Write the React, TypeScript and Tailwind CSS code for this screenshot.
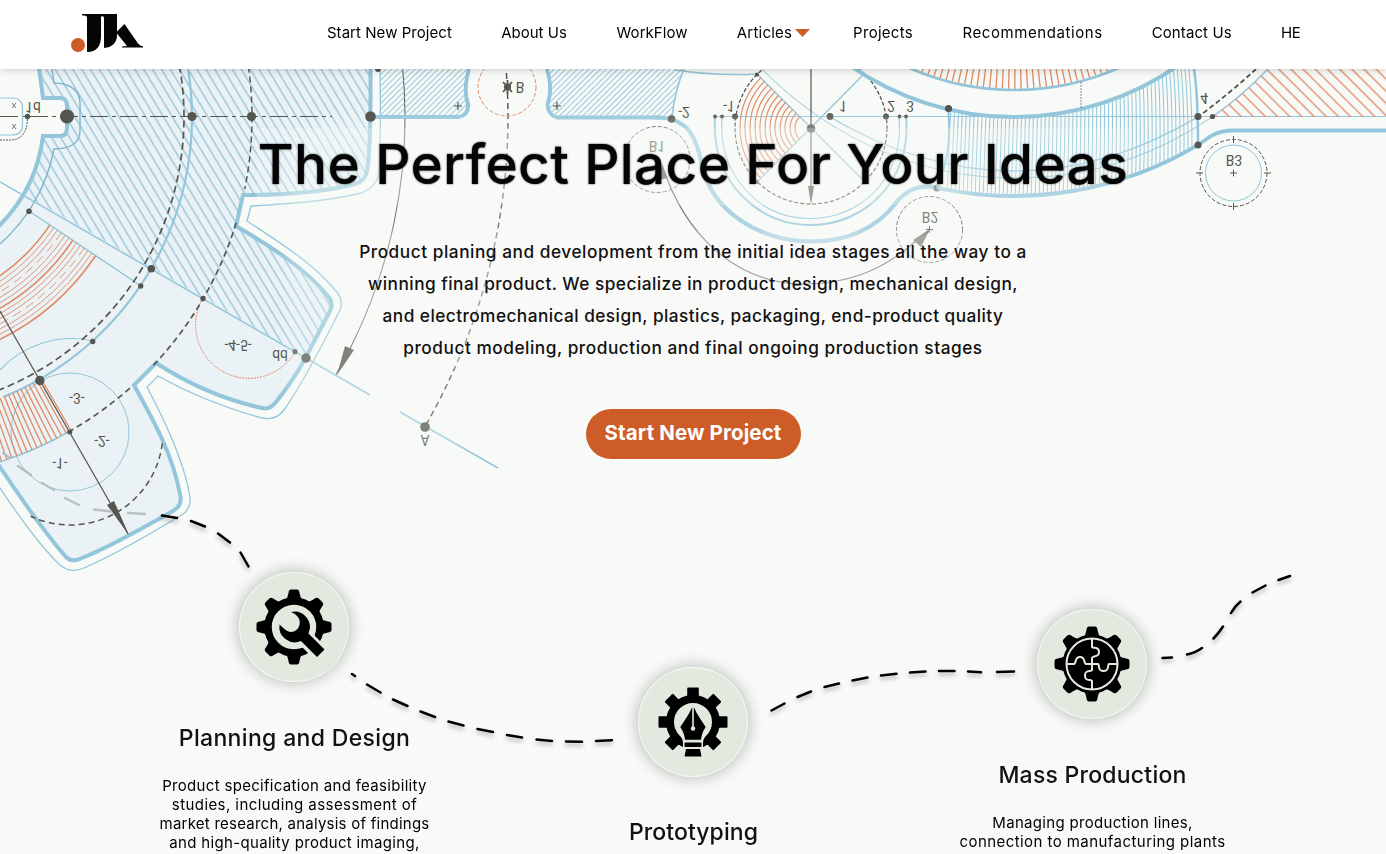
import React from 'react';

const BLUE = '#93c6da';
const ORANGE = '#e08a64';
const DARK = '#55564f';
const SAGE = '#e2eadf';

const rad = (deg: number) => (deg * Math.PI) / 180;
const polar = (cx: number, cy: number, r: number, deg: number) =>
  `${(cx + r * Math.cos(rad(deg))).toFixed(1)} ${(cy + r * Math.sin(rad(deg))).toFixed(1)}`;
const arc = (cx: number, cy: number, r: number, a: number, b: number) =>
  `M${polar(cx, cy, r, a)} A${r} ${r} 0 0 1 ${polar(cx, cy, r, b)}`;
const ray = (cx: number, cy: number, r1: number, r2: number, deg: number) =>
  `M${polar(cx, cy, r1, deg)} L${polar(cx, cy, r2, deg)}`;
const range = (from: number, to: number, step: number) => {
  const out: number[] = [];
  for (let v = from; v <= to; v += step) out.push(v);
  return out;
};

type NoteProps = { x: number; y: number; size?: number; fill?: string; children: string };
function Note({ x, y, size = 15, fill = '#55564f', children }: NoteProps) {
  return (
    <text
      transform={`translate(${x} ${y}) scale(0.92 -1)`}
      textAnchor="middle"
      dominantBaseline="central"
      fontSize={size}
      fill={fill}
      className="font-['Roboto'] font-normal"
    >
      {children}
    </text>
  );
}

const GEAR =
  'M0 60 L38 60 L43 98 H60 Q67 98 67 106 V128 Q67 136 60 136 H43 A154 154 0 0 1 -10 234 L-10 460 L0 467 C22 500 44 532 66 557 Q72 563 82 558 C112 546 143 528 173 511 Q183 505 180 494 C172 452 153 420 134 385 L156 363 C190 385 225 400 262 408 Q270 410 276 402 C288 387 298 372 306 357 L330 311 Q334 303 328 296 C305 268 270 246 236 226 L243 195 C290 195 325 192 355 184 Q367 181 368 165 Q371 140 370.5 60';
const GEAR_HATCH =
  'M38 60 L43 98 H60 Q67 98 67 106 V128 Q67 136 60 136 H43 A154 154 0 0 1 24 194 L306 357 L330 311 Q334 303 328 296 C305 268 270 246 236 226 L243 195 C290 195 325 192 355 184 Q367 181 368 165 Q371 140 370.5 60 Z';

function Blueprint() {
  const gx = -110;
  const gy = 117;
  return (
    <svg width="1386" height="600" viewBox="0 0 1386 600" fill="none" className="absolute left-0 top-0">
      <defs>
        <pattern id="steep" width="7.6" height="10" patternUnits="userSpaceOnUse" patternTransform="rotate(-31)">
          <path d="M4 0 V10" stroke={BLUE} strokeWidth="1.35" />
        </pattern>
        <pattern id="fine" width="4.1" height="10" patternUnits="userSpaceOnUse" patternTransform="rotate(45)">
          <path d="M2 0 V10" stroke={BLUE} strokeWidth="1" />
        </pattern>
        <pattern id="rust" width="8.6" height="10" patternUnits="userSpaceOnUse" patternTransform="rotate(-45)">
          <path d="M4 0 V10" stroke={ORANGE} strokeWidth="1.3" />
        </pattern>
        <clipPath id="band">
          <path d="M857 69 A287 287 0 0 0 1170 69 H1194 Q1198 95 1198 145 A361 361 0 0 1 937 188 Q953 150 948 108 Z" />
        </clipPath>
        <filter id="soft" x="-20%" y="-20%" width="140%" height="140%">
          <feGaussianBlur stdDeviation="6" />
        </filter>
      </defs>

      {/* large gear */}
      <path d={GEAR} fill="#ebf2f5" />
      <path d={GEAR_HATCH} fill="url(#steep)" />
      <g stroke={BLUE}>
        <path d="M38 60 L43 98 H60 Q67 98 67 106 V128 Q67 136 60 136 H43 A154 154 0 0 1 -1 226" strokeWidth="4" />
        <path d="M52 69 L54 83 C72 83 80 92 80 103 V131 C80 143 70 149 54 149 A168 168 0 0 1 0 244" stroke="#7fb4cb" strokeWidth="1.4" />
        <path d={arc(gx, gy, 302, -9, 68)} strokeWidth="2.2" />
        <path d={arc(gx, gy, 362, 60, 75)} strokeWidth="1.5" />
        <path d="M0 182 L370 395 M400 412 L498 468 M29 211 L141 286" strokeWidth="1.5" />
        <path d="M-2 464 C22 500 44 532 66 557 Q72 563 82 558 C112 546 143 528 173 511 Q183 505 180 494 C172 452 153 420 134 385 L156 363 C190 385 225 400 262 408 Q270 410 276 402 C288 387 298 372 306 357 L330 311 Q334 303 328 296 C305 268 270 246 236 226 L243 195 C290 195 325 192 355 184 Q367 181 368 165 Q371 140 370.5 60" strokeWidth="4" />
        <path d="M0 488 C20 518 42 548 60 565 Q71 574 84 568 C118 553 152 533 183 514 Q191 508 190 497 C184 460 163 417 147 387 L158 376 C190 394 225 408 262 418 Q276 421 284 410 C303 383 322 346 340 310 Q344 300 336 291 C312 262 280 243 247 221 L251 206 C290 204 330 201 361 193 Q378 187 379 170 Q381 140 380 69" strokeWidth="1.3" />
        <circle cx="70" cy="432" r="59" strokeWidth="1" />
        <path d="M0 370 A97 97 0 0 1 93 341" strokeWidth="1.2" />
      </g>

      <g stroke={ORANGE}>
        {range(193, 248, 4.58).map((r, i) => (
          <path
            key={r}
            d={arc(gx, gy, r, 34, 68)}
            strokeWidth={i === 0 || i === 6 || i === 12 ? 1.6 : 0.9}
            strokeDasharray={i === 3 || i === 9 ? '9 6' : undefined}
          />
        ))}
        {range(60, 75, 0.86).map((a) => (
          <path key={a} d={ray(gx, gy, 302, 362, a)} strokeWidth="1.3" />
        ))}
        <path d="M203 298 A52 52 0 1 0 295 352" strokeWidth="1" strokeDasharray="2 1" />
      </g>

      <g stroke={DARK}>
        <path d={arc(gx, gy, 294, -10, 70)} strokeWidth="1.7" strokeDasharray="7 4" />
        <path d={arc(gx, gy, 362, -8, 11.5)} strokeWidth="1.5" strokeDasharray="6 4" />
        <path d={arc(gx, gy, 362, 17, 43.5)} strokeWidth="1.7" strokeDasharray="6 4" />
        <path d={arc(gx, gy, 362, 48.5, 60)} strokeWidth="1.7" strokeDasharray="6 4" />
        <path d={arc(70, 432, 93, 7, 115)} strokeWidth="1.5" strokeDasharray="6 4" />
        <path d="M0 311 L128 534" strokeWidth="1.2" />
        <path d="M0 116.500 H332" strokeWidth="1" strokeDasharray="18 4 4 4" />
        <path d="M0 140 H10 Q27 140 27.500 118" strokeWidth="1" strokeDasharray="2 1" />
        <path d={arc(gx, gy, 515, -6, 30)} strokeWidth="1.1" />
        <path d={arc(gx, gy, 618, -5, 30)} strokeWidth="1.5" strokeDasharray="6 4" />
        <path d="M12 103 l4 5 m0 -5 l-4 5 M12 124 l4 5 m0 -5 l-4 5" strokeWidth="0.8" />
      </g>
      <path d="M0 98 H12 Q22.500 98 22.500 108 V125 Q22.500 135 12 135 H0" stroke={BLUE} strokeWidth="1.2" />
      <g fill={DARK}>
        <circle cx="67" cy="116.500" r="7" />
        <circle cx="27.500" cy="116.500" r="2.700" />
        <circle cx="192" cy="116.500" r="4.600" />
        <circle cx="251.500" cy="116.500" r="4.600" />
        <circle cx="29" cy="211.300" r="2.800" />
        <circle cx="151.300" cy="268.700" r="3.800" />
        <circle cx="140.700" cy="286" r="2.700" />
        <circle cx="203" cy="298.500" r="2.700" />
        <circle cx="92.700" cy="341.500" r="2.700" />
        <circle cx="39.800" cy="380.500" r="4.700" />
        <circle cx="69.700" cy="432" r="2.500" />
        <circle cx="306" cy="358" r="4.700" />
        <circle cx="295" cy="351.700" r="2.600" />
        <circle cx="425" cy="427" r="4.800" />
        <path d="M107 505 L114 501 L129 535 Z" />
        <path d="M337 375 L345 346 L354 350 Z" />
        <circle cx="378" cy="69" r="3" />
      </g>

      {/* upper bracket */}
      <g>
        <path d="M380 69 H470 Q464 90 469 105 Q467 115 459 117 H380 Z" fill="url(#fine)" />
        <path d="M547 69 Q553 90 547 105 Q549 115 557 117 H672 Q675 90 684 69 Z" fill="url(#fine)" />
        <path d="M374 117 H459 Q469 115 468 104 Q463 90 469 69 M547 69 Q553 90 547.500 104 Q548 115 557 117.500 H660" stroke={BLUE} strokeWidth="3.800" />
        <path d="M672 117 Q675 90 684 69" stroke={BLUE} strokeWidth="1.600" />
        <path d="M675 70 Q715 76 757 74" stroke={BLUE} strokeWidth="1.300" />
        <circle cx="507" cy="87" r="29" stroke={ORANGE} strokeWidth="1" strokeDasharray="4 2" />
        <path d="M507.500 80 V94 M503 82 L512 92 M512 82 L503 92" stroke={DARK} strokeWidth="1.800" />
        <circle cx="507.500" cy="87" r="3.600" fill={DARK} />
        <path d="M454 106 h8 m-4 -4 v8 M553 106 h8 m-4 -4 v8" stroke={DARK} strokeWidth="1.200" />
      </g>

      {/* rotor */}
      <path d="M655 117.500 C690 117 697 140 702 165 C712 213 762 241.500 811 241.500 C850 241.500 878 226 896 203 C907 189 920 184 937 188" stroke={BLUE} strokeWidth="4.200" />
      <g stroke={BLUE}>
        <path d="M715 117 C713 145 721 170 735 188 C758 216 785 225 811 225 C865 225 912 180 906 117" strokeWidth="2" />
        <path d="M722 117 C720 145 727 166 740 183 C760 210 785 218.500 811 218.500 C860 218.500 905 178 899 117" strokeWidth="1.200" />
        <path d="M717 116.500 H1386" strokeWidth="1.100" />
        <path d="M757 74 L865 182 M757 182 L864 74" strokeWidth="1.300" />
        <path d="M763 70 C830 138 920 178 1013 178 C1090 178 1150 158 1212 117" strokeWidth="1" />
        <path d="M830 117 C885 150 950 171 1013 171 C1085 171 1145 148 1198 117" strokeWidth="1.300" />
      </g>
      <g stroke={ORANGE} strokeWidth="1.200">
        {range(16, 72, 5).map((r) => (
          <path key={r} d={arc(811, 128, r, 135, 225)} />
        ))}
      </g>
      <circle cx="811" cy="128" r="76" stroke={DARK} strokeWidth="1.300" strokeDasharray="4 2" />
      <path d="M811 69 V190 M662 165 C685 235 735 283 803 284 C855 284 890 265 918 239" stroke={DARK} strokeWidth="1.200" />
      <g fill={DARK}>
        <path d="M808 186 H814 L811 205 Z M658 180 L662 165 L668 178 Z M913 240 L930 229 L921 247 Z" />
        <circle cx="811" cy="128.500" r="4.300" />
        <circle cx="830" cy="116.500" r="3.400" />
        <circle cx="735" cy="116.500" r="3" />
        <circle cx="715" cy="116.500" r="1.900" />
        <circle cx="722" cy="116.500" r="1.900" />
        <circle cx="886" cy="116.500" r="3" />
        <circle cx="899.500" cy="116.500" r="1.900" />
        <circle cx="906" cy="116.500" r="1.900" />
        <circle cx="757" cy="74.500" r="2" />
        <circle cx="757" cy="182" r="2" />
        <circle cx="865" cy="182" r="2" />
        <circle cx="671.500" cy="119" r="3.800" />
        <circle cx="937" cy="188" r="3.500" />
      </g>
      <g stroke={DARK} strokeWidth="1" strokeDasharray="4 2">
        <circle cx="657" cy="159.500" r="33" />
        <circle cx="929.500" cy="229.500" r="33" />
        <circle cx="1233.500" cy="173" r="33.500" />
      </g>
      <circle cx="1233.500" cy="173" r="28" stroke={BLUE} strokeWidth="1" />
      <path
        d="M1230 173 h7 m-3.500 -3.500 v7 M1233.500 136 v7 M1233.500 203 v7 M1196 173 h7 M1264 173 h7 M926 229.500 h7 m-3.500 -3.500 v7"
        stroke={DARK}
        strokeWidth="1"
      />

      {/* large wheel on the right */}
      <g clipPath="url(#band)" stroke={BLUE} strokeWidth="1">
        {range(950, 1197, 4).map((x) => (
          <path key={x} d={`M${x - (x - 1040) * 0.04} 60 Q${x} 110 ${x - 3} 200`} />
        ))}
      </g>
      <g stroke={ORANGE} strokeWidth="1.300">
        {range(66, 114, 1.4).map((a) => (
          <path key={a} d={ray(1014, -170, 230, 259, a)} />
        ))}
      </g>
      <g stroke={BLUE}>
        <path d={arc(1014, -170, 260, 66, 114)} strokeWidth="2.500" />
        <path d={arc(1014, -170, 287, 55, 125)} strokeWidth="4" />
        <path d={arc(1013, -165, 361, 59, 102)} strokeWidth="4" />
        <path d="M948 108 Q953 150 937 188" strokeWidth="2" />
        <path d="M1194 69 Q1198 95 1198 145" strokeWidth="2.500" />
        <path d="M1198 145 L1211 136 Q1220 130.500 1234 130.500 H1386" strokeWidth="3.800" />
        <path d="M1268 69 Q1240 98 1212 117" strokeWidth="1.500" />
      </g>
      <path d="M1268 69 Q1240 98 1212 117 H1386 V69 Z" fill="url(#rust)" />
      <path d="M1256 69 Q1230 93 1198 117" stroke={DARK} strokeWidth="1.800" strokeDasharray="5 3" />
      <path d="M1081 82 V109" stroke={DARK} strokeWidth="0.700" strokeDasharray="2 1" />
      <g fill={DARK}>
        <circle cx="948.500" cy="108.500" r="3.600" />
        <circle cx="1198" cy="116.500" r="3.500" />
        <circle cx="1198" cy="145" r="3.500" />
        <circle cx="1212.500" cy="116.500" r="2.600" />
      </g>

      {/* annotations */}
      <Note x={33} y={107}>1d</Note>
      <Note x={238} y={345}>-4-5-</Note>
      <Note x={280} y={355}>dd</Note>
      <Note x={77} y={398}>-3-</Note>
      <Note x={102} y={441}>-2-</Note>
      <Note x={60} y={463}>-1-</Note>
      <Note x={425} y={440}>A</Note>
      <Note x={520} y={87}>B</Note>
      <Note x={684} y={112}>-2</Note>
      <Note x={729} y={106}>-1</Note>
      <Note x={843} y={106}>1</Note>
      <Note x={891} y={106}>2</Note>
      <Note x={910} y={106}>3</Note>
      <Note x={657} y={146}>B1</Note>
      <Note x={930} y={217}>B2</Note>
      <Note x={1234} y={160}>B3</Note>
      <Note x={1204} y={98}>4</Note>

      <rect x="288" y="118" width="680" height="330" rx="60" fill="#f8faf7" fillOpacity="0.26" filter="url(#soft)" />
      <circle cx="370.500" cy="116.500" r="5.300" fill={DARK} />
    </svg>
  );
}

const DASHES_FADED = 'M3 453 L10 458 M18 466 L31 475 M42 483 L54 490 M65 498 L79 505 M94 509.500 L111 511.500 M128 513 L145 514';
const DASHES =
  'M162 515.500 L177 518 M191 521 L205 526.500 M218 533.500 L230 542.500 M240.500 552.500 L248.500 566.500' +
  ' M352 674 L355 676 M367 684.500 L380.500 692.500 M393 699.500 L407.500 706 M420.500 711.500 L435 717 M448.500 721.500 L463.500 725.500 M477.500 729 L493 732 M507 735 L522 737.500 M536.500 739.500 L552 741 M566 741.500 L582 741.800 M596 741 L612 740.300' +
  ' M771.500 710.500 L784.500 703.500 M797.500 697 L811 691.500 M824.500 687 L839 683.500 M852.500 680.500 L867.500 677.500 M881 675.500 L896.500 673.800 M910 672.600 L925.500 671.600 M939 671 L954.500 671 M968 671.500 L981 672.300 M997 672 L1014 671.500' +
  ' M1162.500 658 L1172 657.500 M1187 654.500 Q1195 653 1202 648 M1213.500 638.500 Q1218 634 1223 626.500 M1231 613 Q1235 606 1240.500 601.500 M1252.500 592.500 L1265.500 585.500 M1278.500 580 L1290 576';

function Road() {
  return (
    <svg width="1386" height="854" viewBox="0 0 1386 854" fill="none" className="absolute left-0 top-0">
      <g strokeLinecap="round" strokeWidth="2.500">
        <path d={DASHES_FADED} stroke="#b9c0c2" />
        <path d={DASHES} stroke="#000" className="drop-shadow-[0_3px_2px_rgba(60,30,40,0.35)]" />
      </g>
    </svg>
  );
}

type TeethProps = { d: string };
function Teeth({ d }: TeethProps) {
  return (
    <>
      {range(0, 315, 45).map((a) => (
        <path key={a} d={d} transform={`rotate(${a})`} />
      ))}
    </>
  );
}

const ROUND_TOOTH = 'M-8.500 -26 Q-6.500 -29 -5.500 -34 Q-5.300 -37.300 -3 -37.500 H3 Q5.300 -37.300 5.500 -34 Q6.500 -29 8.500 -26 Z';

function WrenchIcon() {
  const wrench =
    'M-3 -15 A15.500 15.500 0 0 1 14.500 6.500 L30.500 22.500 L23 30 L7 14 A15.500 15.500 0 0 1 -14.500 -2.500 L-9 2.500 C-5 6 0 5.500 3.500 2 C6.500 -2 6.500 -7 3.500 -10.500 C2 -12.500 0 -13.500 -3 -15 Z';
  return (
    <svg viewBox="-55 -55 110 110" className="size-[110px]">
      <Teeth d={ROUND_TOOTH} />
      <circle r="26" fill="none" stroke="#000" strokeWidth="7.500" />
      <path d="M10 10 L40 40" stroke={SAGE} strokeWidth="17" />
      <path d={wrench} />
    </svg>
  );
}

function PenIcon() {
  return (
    <svg viewBox="-55 -55 110 110" className="size-[110px]">
      <Teeth d="M-5.800 -25 V-33.500 Q-5.800 -34.500 -4.800 -34.500 H4.800 Q5.800 -34.500 5.800 -33.500 V-25 Z" />
      <circle r="23" fill="none" stroke="#000" strokeWidth="8" />
      <path d="M-14 12 Q-10 17 -10 21 V36 H10 V21 Q10 17 14 12 Z" fill={SAGE} />
      <path d="M-1 -14.500 H1 C4 -7 9 -1 12.700 5 C10 9 8.500 13 8 17.800 H-8 C-8.500 13 -10 9 -12.700 5 C-9 -1 -4 -7 -1 -14.500 Z" />
      <path d="M0 -16 V5" stroke={SAGE} strokeWidth="1.600" />
      <circle cy="6.500" r="2.200" fill={SAGE} />
      <rect x="-8.500" y="20.500" width="17" height="4.500" rx="1" />
      <path d="M-7 27 H7 L8.500 34.500 H-8.500 Z" />
    </svg>
  );
}

function PuzzleIcon() {
  return (
    <svg viewBox="-55 -55 110 110" className="size-[110px]">
      <Teeth d={ROUND_TOOTH} />
      <circle r="29.500" />
      <g fill="none" stroke={SAGE} strokeWidth="2">
        <circle r="25.500" />
        <path d="M0 -25.500 V-17 C1 -15 7 -18 7 -12 C7 -6 1 -9 0 -6 V6 C-1 8 -7 5 -7 11.500 C-7 18 -1 15 0 17 V25.500" />
        <path d="M-25.500 0 H-18 C-15 -1 -18 -7 -12 -7 C-6 -7 -9 -1 -6 0 H6 C8 1 5 7 11.500 7 C18 7 15 1 17 0 H25.500" />
      </g>
    </svg>
  );
}

function Logo() {
  return (
    <svg width="74" height="42" viewBox="70 12 74 42" className="shrink-0">
      <circle cx="78" cy="45" r="7" fill="#cd5c28" />
      <path d="M82 14 H117 V31.500 L124.500 24 L138 43.500 Q140 46 143 46.300 V47.500 H122 V46.500 L127 46 L117 33.500 V36 Q116 47 104 48 V18 Q103.500 16 102.200 16 Q101 16 101 18 V36 C101 46 97 52 87 52 V17 Q86 15.300 82 15.300 Z" fill="#050505" />
    </svg>
  );
}

const NAV = [
  { label: 'Start New Project', cls: 'w-[125px] tracking-[0.05px]' },
  { label: 'About Us', cls: 'w-[66px]' },
  { label: 'WorkFlow', cls: 'w-[71px] tracking-[0.05px]' },
  { label: 'Articles', cls: 'w-[55px] tracking-[0.2px]' },
  { label: 'Projects', cls: 'w-[60px] tracking-[0.27px]' },
  { label: 'Recommendations', cls: 'w-[140px] tracking-[0.58px]' },
  { label: 'Contact Us', cls: 'w-[80px] tracking-[0.1px]' },
  { label: 'HE', cls: 'w-[20px] tracking-[-0.5px]' },
];

const PITCH = [
  { text: 'Product planing and development from the initial idea stages all the way to a', cls: 'tracking-[0.535px]' },
  { text: 'winning final product. We specialize in product design, mechanical design,', cls: 'tracking-[0.475px]' },
  { text: 'and electromechanical design, plastics, packaging, end-product quality', cls: 'tracking-[0.445px]' },
  { text: 'product modeling, production and final ongoing production stages', cls: 'tracking-[0.53px]' },
];

const STEPS = [
  {
    icon: <WrenchIcon />,
    title: 'Planning and Design',
    pad: 'pt-[572px]',
    titleCls: 'mt-10 tracking-[0.338px]',
    lines: [
      { text: 'Product specification and feasibility', cls: 'tracking-[0.31px]' },
      { text: 'studies, including assessment of', cls: 'tracking-[0.43px]' },
      { text: 'market research, analysis of findings', cls: 'tracking-[0.24px]' },
      { text: 'and high-quality product imaging,', cls: 'tracking-[0.33px]' },
    ],
  },
  {
    icon: <PenIcon />,
    title: 'Prototyping',
    pad: 'pt-[667px]',
    titleCls: 'mt-[39px] tracking-[0.077px]',
    lines: [],
  },
  {
    icon: <PuzzleIcon />,
    title: 'Mass Production',
    pad: 'pt-[609px]',
    titleCls: 'mt-10 tracking-[0.233px]',
    lines: [
      { text: 'Managing production lines,', cls: 'tracking-[0.31px]' },
      { text: 'connection to manufacturing plants', cls: 'tracking-[0.44px]' },
    ],
  },
];

export default function App() {
  return (
    <div className="relative h-[854px] w-[1386px] overflow-hidden bg-[#f8faf7] font-['Inter',sans-serif] text-black">
      <Blueprint />
      <Road />

      <header className="relative z-10 flex h-[69px] items-center bg-white pl-[70px] pr-[85px] shadow-[0_1px_8px_rgba(0,0,0,0.18)]">
        <div className="-mt-[3px]">
          <Logo />
        </div>
        <nav className="-mt-[3px] ml-auto flex items-center gap-[49.3px] whitespace-nowrap text-[15px]">
          {NAV.map(({ label, cls }) =>
            label === 'Articles' ? (
              <a key={label} className="-mr-[6px] flex items-center gap-[3px]">
                <span className={cls}>{label}</span>
                <svg width="15" height="8" viewBox="0 0 15 8">
                  <path d="M0 0 H15 L7.500 8 Z" fill="#cd5c28" />
                </svg>
              </a>
            ) : (
              <a key={label} className={cls}>{label}</a>
            ),
          )}
        </nav>
      </header>

      <main className="relative flex flex-col items-center whitespace-nowrap pt-[59px]">
        <h1 className="flex h-[77px] w-[872px] items-center justify-center bg-[#f8faf7]/25 pb-[4px] text-[55px] font-medium tracking-[0.344px] text-[#050505] backdrop-blur-[0.6px] [text-shadow:0_0_2px_rgba(0,0,0,0.8)]">
          The Perfect Place For Your Ideas
        </h1>
        <div className="mt-[31px] flex w-[668px] flex-col items-center rounded-lg bg-[#fbfaf8]/30 text-[17.25px] font-medium leading-[32px] text-[#111] shadow-[0_0_6px_4px_rgba(251,250,248,0.3)]">
          {PITCH.map(({ text, cls }) => (
            <p key={text} className={cls}>{text}</p>
          ))}
        </div>
        <button className="mt-[45px] h-[50px] w-[215px] rounded-full bg-[#cd5c28] pb-[2px] text-[20.5px] font-bold tracking-[0.12px] text-white">
          Start New Project
        </button>
      </main>

      <section className="absolute inset-0 flex pl-[95px]">
        {STEPS.map(({ icon, title, pad, titleCls, lines }) => (
          <article key={title} className={`flex w-[399px] shrink-0 flex-col items-center ${pad}`}>
            <div className="mr-px size-[110px] shrink-0 rounded-full bg-[#e2eadf] shadow-[inset_0_0_0_1px_#f6f8f5,0_0_14px_3px_rgba(0,0,0,0.2)]">
              {icon}
            </div>
            <h2 className={`text-[23px] font-medium leading-8 text-[#111] ${titleCls}`}>{title}</h2>
            <div className="mt-[22px] flex flex-col items-center whitespace-nowrap text-[15px] leading-[19px]">
              {lines.map(({ text, cls }) => (
                <p key={text} className={cls}>{text}</p>
              ))}
            </div>
          </article>
        ))}
      </section>
    </div>
  );
}
